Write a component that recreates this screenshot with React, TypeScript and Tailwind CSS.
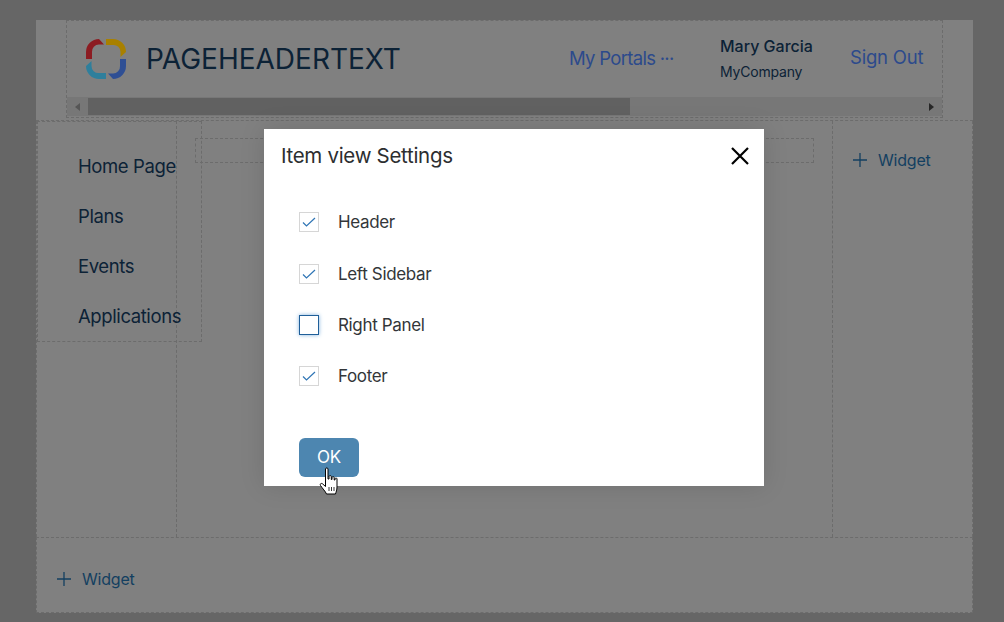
import React from "react";

const font = { fontFamily: "Inter, 'Liberation Sans', sans-serif" };

function Logo() {
  const d = "M0 20V13A13 13 0 0 1 13 0L18 5.5H13A7 7 0 0 0 6 13V20Z";
  return (
    <svg width="40" height="40" viewBox="0 0 40 40" className="shrink-0">
      <path d={d} fill="#8c1c22" />
      <path d={d} fill="#a88000" transform="rotate(90 20 20)" />
      <path d={d} fill="#2f4f94" transform="rotate(180 20 20)" />
      <path d={d} fill="#2f7f9c" transform="rotate(270 20 20)" />
    </svg>
  );
}

function Plus() {
  return (
    <svg width="14" height="14" viewBox="0 0 14 14" className="shrink-0">
      <path d="M7 0V14M0 7H14" stroke="#133f60" strokeWidth="1.3" />
    </svg>
  );
}

function Widget() {
  return (
    <div className="flex items-center gap-[11px] text-[16px] leading-[20px] tracking-[-0.2px] text-[#133f60]">
      <Plus />
      <span>Widget</span>
    </div>
  );
}

function Check({ label, checked, mt }: { label: string; checked: boolean; mt: string }) {
  return (
    <div className={"flex items-center h-[20px] " + mt}>
      {checked ? (
        <div className="w-[20px] h-[20px] border border-[#d6d6d6] flex items-center justify-center shrink-0">
          <svg width="14" height="10" viewBox="0 0 14 10">
            <path d="M1 5.5L4.5 9L13 1" fill="none" stroke="#2f75b5" strokeWidth="1.2" />
          </svg>
        </div>
      ) : (
        <div className="w-[20px] h-[20px] border-[1.5px] border-[#1f5f99] shadow-[0_0_4px_#7fb0dd] shrink-0" />
      )}
      <span className="ml-[19px] text-[17px] leading-[20px] tracking-[-0.35px] text-[#333639]">{label}</span>
    </div>
  );
}

function Hand() {
  return (
    <svg width="22" height="28" viewBox="0 0 22 28" className="absolute left-[20px] top-[29px]">
      <path
        d="M6.5 2C6.5 .6 9 .6 9 2V12L10 12V9.5C10 8.3 12.3 8.3 12.3 9.5V12.5H13V10.5C13 9.4 15.2 9.4 15.2 10.5V13H16V11.8C16 10.8 18 10.8 18 11.8V20C18 23 17 25 16.5 27H7.5C6.5 24.5 3.5 21.5 1.5 18.5C.6 17 2.2 15.8 3.5 16.8L6.5 19.5Z"
        fill="#fff"
        stroke="#000"
        strokeWidth="1"
      />
      <path d="M10 20V24M12.5 20V24M15 20V24" stroke="#000" strokeWidth=".8" />
    </svg>
  );
}

export default function App() {
  const nav = ["Home Page", "Plans", "Events", "Applications"];
  return (
    <div style={font} className="relative w-[1004px] h-[622px] overflow-hidden bg-[#666666] pt-[20px] pl-[36px] pr-[31px] pb-[9px]">
      <div className="h-full flex flex-col bg-[#808080]">
        {/* Header */}
        <div className="h-[98px] mx-[30px] border border-dashed border-[#6c6c6c] flex flex-col shrink-0">
          <div className="h-[76px] flex items-center pl-[19px]">
            <Logo />
            <span className="ml-[20px] text-[28px] leading-[36px] text-[#0c2236] -mt-[1px] w-[423px] shrink-0">PAGEHEADERTEXT</span>
            <span className="text-[18.5px] leading-[24px] text-[#2c4a8c] tracking-[-0.7px] -mt-[3px] w-[151px] shrink-0">My Portals ···</span>
            <div className="flex flex-col w-[130px] shrink-0 -mt-[1px]">
              <span className="text-[16px] leading-[20px] font-medium text-[#0c2236]">Mary Garcia</span>
              <span className="mt-[6px] text-[14px] leading-[20px] tracking-[-0.2px] text-[#0c2236]">MyCompany</span>
            </div>
            <span className="text-[18.5px] leading-[24px] text-[#2c4a8c] tracking-[-0.2px] -mt-[4px]">Sign Out</span>
          </div>
          <div className="h-[19px] bg-[#777777] flex items-center">
            <div className="w-[21px] flex justify-center">
              <div className="w-0 h-0 border-y-[4px] border-y-transparent border-r-[5px] border-r-[#565656]" />
            </div>
            <div className="w-[542px] h-[17px] bg-[#616161]" />
            <div className="flex-1" />
            <div className="w-[21px] flex justify-center">
              <div className="w-0 h-0 border-y-[4px] border-y-transparent border-l-[5px] border-l-[#262626]" />
            </div>
          </div>
        </div>

        {/* Body */}
        <div className="flex-1 flex mt-[2px] border-t border-dashed border-[#6c6c6c] min-h-0">
          <div className="w-[141px] shrink-0 border-l border-r border-dashed border-[#6c6c6c]">
            <div className="w-[165px] h-[221px] border border-dashed border-[#6c6c6c] pl-[40px] pt-[32px] flex flex-col gap-[26px]">
              {nav.map((n) => (
                <div key={n} className="text-[18.5px] leading-[24px] tracking-[-0.4px] text-[#0c2236] whitespace-nowrap">{n}</div>
              ))}
            </div>
          </div>
          <div className="flex-1 pt-[17px] pl-[18px] pr-[18px]">
            <div className="h-[25px] border border-dashed border-[#6c6c6c]" />
          </div>
          <div className="w-[141px] shrink-0 border-l border-r border-dashed border-[#6c6c6c] pt-[29px] pl-[20px]">
            <Widget />
          </div>
        </div>

        {/* Footer */}
        <div className="h-[76px] shrink-0 border border-dashed border-[#6c6c6c] pt-[31px] pl-[20px]">
          <Widget />
        </div>
      </div>

      {/* Modal */}
      <div className="absolute left-[264px] top-[129px] w-[500px] h-[357px] bg-white shadow-[0_0_24px_rgba(0,0,0,0.12)]">
        <div className="flex items-center justify-between pl-[17px] pr-[14px] pt-[13px]">
          <span className="text-[20.5px] leading-[28px] text-[#2c2e30] tracking-[-0.3px]">Item view Settings</span>
          <svg width="20" height="20" viewBox="0 0 20 20">
            <path d="M2 2L18 18M18 2L2 18" stroke="#000" strokeWidth="2.2" />
          </svg>
        </div>
        <div className="pl-[35px] pt-[42px]">
          <Check label="Header" checked mt="" />
          <Check label="Left Sidebar" checked mt="mt-[32px]" />
          <Check label="Right Panel" checked={false} mt="mt-[31px]" />
          <Check label="Footer" checked mt="mt-[31px]" />
          <div className="relative mt-[52px] w-[60px] h-[39px] rounded-[6px] bg-[#4d86b0] pt-[1px] flex items-center justify-center text-[17px] tracking-[-0.2px] text-white">
            OK
            <Hand />
          </div>
        </div>
      </div>
    </div>
  );
}
